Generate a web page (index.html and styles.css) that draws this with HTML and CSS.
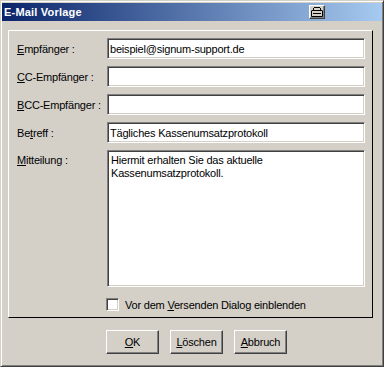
FILE: index.html
```html
<!DOCTYPE html>
<html lang="de">
<head>
    <meta charset="UTF-8">
    <title>E-Mail Vorlage</title>
    <link rel="stylesheet" href="styles.css">
</head>
<body>
    <div class="window">
        <div class="titlebar">
            <span class="title">E-Mail Vorlage</span>
            <span class="title-btn">
                <svg width="12" height="10" viewBox="0 0 12 10">
                    <path d="M3 0.5h6M2.5 1v2M9.5 1v2M0.5 3.5h11M0.5 4v5.5h11V4M2 6.5h8" stroke="#000" stroke-width="1" fill="none"/>
                </svg>
            </span>
        </div>

        <form class="frame" id="mailForm">
            <div class="row">
                <label for="to"><u>E</u>mpfänger :</label>
                <input type="text" id="to" value="beispiel@signum-support.de">
            </div>
            <div class="row">
                <label for="cc"><u>C</u>C-Empfänger :</label>
                <input type="text" id="cc" value="">
            </div>
            <div class="row">
                <label for="bcc"><u>B</u>CC-Empfänger :</label>
                <input type="text" id="bcc" value="">
            </div>
            <div class="row">
                <label for="subject">Be<u>t</u>reff :</label>
                <input type="text" id="subject" value="Tägliches Kassenumsatzprotokoll">
            </div>
            <div class="row row-memo">
                <label for="message"><u>M</u>itteilung :</label>
                <textarea id="message">Hiermit erhalten Sie das aktuelle
Kassenumsatzprotokoll.</textarea>
            </div>
            <div class="check-row">
                <input type="checkbox" id="showDialog">
                <label for="showDialog">Vor dem <u>V</u>ersenden Dialog einblenden</label>
            </div>
        </form>

        <div class="buttons">
            <button type="button"><u>O</u>K</button>
            <button type="button"><u>L</u>öschen</button>
            <button type="button"><u>A</u>bbruch</button>
        </div>
    </div>
</body>
</html>
```

FILE: styles.css
```css
body {
    margin: 0;
    padding: 0;
    background-color: #d4d0c8;
    font-family: "Liberation Sans", Arial, sans-serif;
    font-size: 11px;
    letter-spacing: -0.2px;
    color: #000;
}

.window {
    width: 384px;
    height: 367px;
    box-sizing: border-box;
    padding: 2px 1px 0 1px;
    background-color: #d4d0c8;
    border: 1px solid;
    border-color: #d4d0c8 #404040 #404040 #d4d0c8;
    box-shadow: inset 1px 1px #fff, inset -1px -1px #808080;
}

.titlebar {
    height: 18px;
    display: flex;
    align-items: center;
    justify-content: space-between;
    padding: 0 57px 0 2px;
    background: linear-gradient(to right, #0a246a, #a6caf0);
}

.title {
    color: #fff;
    font-weight: bold;
    font-size: 11px;
    letter-spacing: 0.2px;
}

.title-btn {
    width: 16px;
    height: 14px;
    box-sizing: border-box;
    display: flex;
    align-items: center;
    justify-content: center;
    background-color: #d4d0c8;
    border: 1px solid;
    border-color: #fff #404040 #404040 #fff;
    box-shadow: inset -1px -1px #808080;
}

.frame {
    width: 365px;
    height: 288px;
    box-sizing: border-box;
    margin: 9px 0 0 6px;
    padding: 7px 7px 0 8px;
    border: 1px solid;
    border-color: #fff #000 #000 #fff;
}

.row {
    display: flex;
    align-items: center;
    height: 21px;
    margin-bottom: 7px;
}

.row label {
    width: 90px;
    flex-shrink: 0;
    white-space: nowrap;
}

input[type="text"],
textarea {
    width: 258px;
    height: 21px;
    box-sizing: border-box;
    margin: 0;
    padding: 0 0 0 2px;
    font-family: "Liberation Sans", Arial, sans-serif;
    font-size: 11px;
    letter-spacing: -0.2px;
    color: #000;
    background-color: #fff;
    border: 1px solid;
    border-color: #808080 #fff #fff #808080;
    box-shadow: inset 1px 1px #404040, inset -1px -1px #d4d0c8;
    outline: none;
}

.row-memo {
    height: 137px;
    align-items: flex-start;
    margin-bottom: 11px;
}

.row-memo label {
    padding-top: 4px;
}

textarea {
    height: 137px;
    padding: 3px 0 0 3px;
    line-height: 13px;
    resize: none;
    overflow: hidden;
}

.check-row {
    display: flex;
    align-items: center;
    height: 13px;
    padding-left: 89px;
}

.check-row input[type="checkbox"] {
    appearance: none;
    width: 13px;
    height: 13px;
    margin: 0 6px 0 0;
    box-sizing: border-box;
    background-color: #fff;
    border: 1px solid;
    border-color: #808080 #fff #fff #808080;
    box-shadow: inset 1px 1px #404040, inset -1px -1px #d4d0c8;
}

.buttons {
    display: flex;
    gap: 11px;
    margin-top: 12px;
    padding-left: 104px;
}

button {
    width: 53px;
    height: 24px;
    padding: 0;
    font-family: "Liberation Sans", Arial, sans-serif;
    font-size: 11px;
    letter-spacing: -0.2px;
    color: #000;
    background-color: #d4d0c8;
    border: 1px solid;
    border-color: #fff #404040 #404040 #fff;
    box-shadow: inset -1px -1px #808080, inset 1px 1px #d4d0c8;
}
```
